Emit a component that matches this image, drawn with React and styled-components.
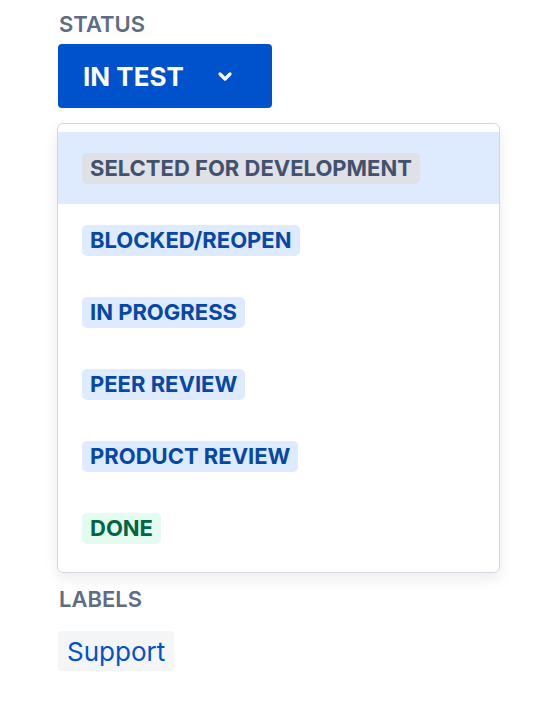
import styled, { createGlobalStyle } from "styled-components";

const GlobalStyle = createGlobalStyle`
    body {
        margin: 0;
        background: #ffffff;
        font-family: Inter, "Noto Sans", "Liberation Sans", sans-serif;
    }
`

const statuses = [
    { name: "SELCTED FOR DEVELOPMENT", tone: "grey", active: true },
    { name: "BLOCKED/REOPEN", tone: "blue" },
    { name: "IN PROGRESS", tone: "blue" },
    { name: "PEER REVIEW", tone: "blue" },
    { name: "PRODUCT REVIEW", tone: "blue" },
    { name: "DONE", tone: "green" },
]

const tones = {
    grey: { bg: "#DFE1E6", fg: "#42526E" },
    blue: { bg: "#DEEBFF", fg: "#0747A6" },
    green: { bg: "#E3FCEF", fg: "#006644" },
}

const App = () => {
    return (
        <Page>
            <GlobalStyle />
            <FieldLabel>STATUS</FieldLabel>
            <StatusButton>
                IN TEST
                <svg width="16" height="11" viewBox="0 0 16 11">
                    <path d="M3 3 L8 8 L13 3" fill="none" stroke="#fff" strokeWidth="3.2" strokeLinecap="round" strokeLinejoin="round" />
                </svg>
            </StatusButton>
            <Menu>
                {statuses.map((s) => (
                    <MenuRow key={s.name} $active={s.active}>
                        <Lozenge $tone={s.tone}>{s.name}</Lozenge>
                    </MenuRow>
                ))}
            </Menu>
            <LabelsTitle>LABELS</LabelsTitle>
            <Tag>Support</Tag>
        </Page>
    )
}

const Page = styled.div`
    padding: 12px 0 0 58px;
    display: flex;
    flex-direction: column;
    align-items: flex-start;
`

const FieldLabel = styled.div`
    font-size: 22px;
    font-weight: 600;
    line-height: 24px;
    color: #5E6C84;
    padding-left: 1px;
`

const LabelsTitle = styled(FieldLabel)`
    margin-top: 14px;
`

const StatusButton = styled.div`
    margin-top: 8px;
    width: 214px;
    height: 64px;
    box-sizing: border-box;
    padding-left: 25px;
    display: flex;
    align-items: center;
    gap: 33px;
    background: #0052CC;
    border-radius: 4px;
    color: #ffffff;
    font-size: 26px;
    font-weight: 700;
    svg {
        margin-top: 1px;
    }
`

const Menu = styled.div`
    margin: 15px 0 0 -1px;
    width: 443px;
    box-sizing: border-box;
    padding: 8px 0;
    border: 1px solid #D4D6DB;
    border-radius: 6px;
    background: #ffffff;
    box-shadow: 0 6px 14px rgba(9, 30, 66, 0.08);
`

const MenuRow = styled.div`
    height: 72px;
    padding-left: 24px;
    display: flex;
    align-items: center;
    background: ${(p) => (p.$active ? "#DEEBFF" : "transparent")};
`

const Lozenge = styled.span`
    height: 31px;
    padding: 0 8px;
    display: inline-flex;
    align-items: center;
    border-radius: 5px;
    font-size: 22px;
    font-weight: 700;
    background: ${(p) => tones[p.$tone].bg};
    color: ${(p) => tones[p.$tone].fg};
`

const Tag = styled.div`
    margin-top: 20px;
    height: 40px;
    padding: 0 9px;
    display: flex;
    align-items: center;
    border-radius: 4px;
    background: #F4F5F7;
    color: #0052CC;
    font-size: 26px;
`

export default App;
